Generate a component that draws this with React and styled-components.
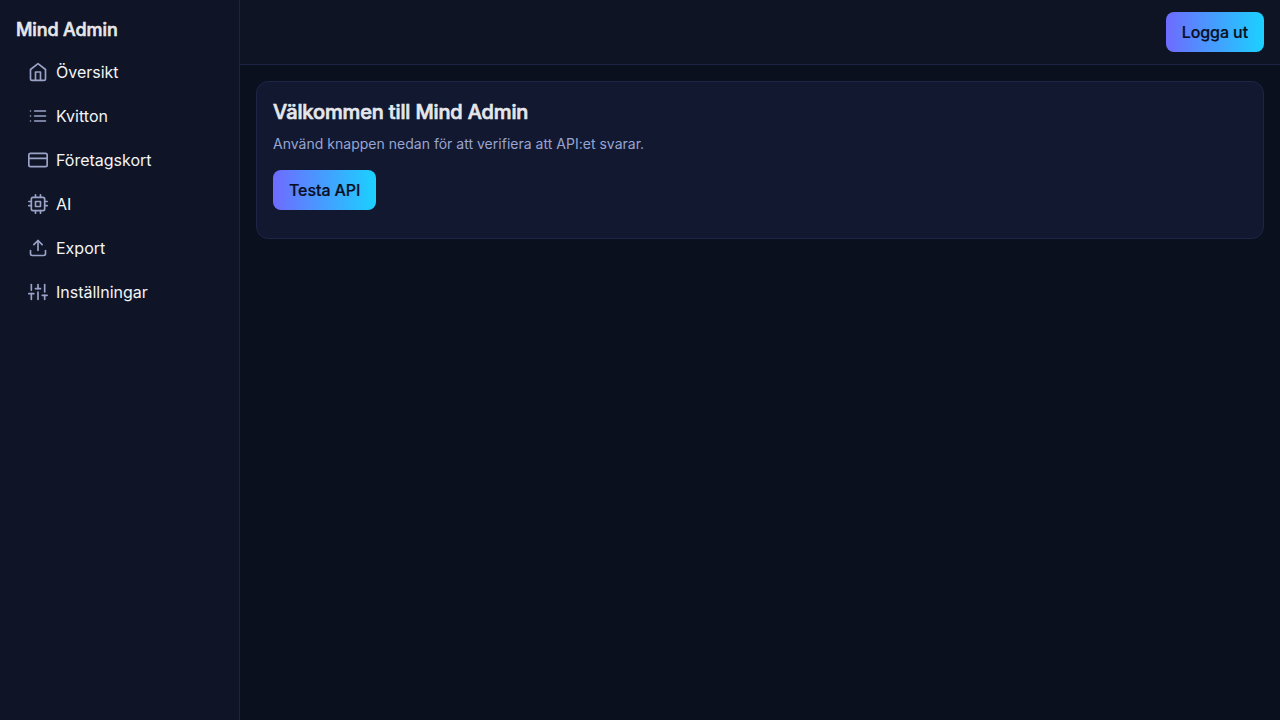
import React from 'react';
import styled, { createGlobalStyle } from 'styled-components';
import { FiHome, FiList, FiCreditCard, FiCpu, FiUpload, FiSliders } from 'react-icons/fi';

const GlobalStyle = createGlobalStyle`
  *, *::before, *::after { box-sizing: border-box; }
  body {
    margin: 0;
    background: #0a101e;
    color: #e5e7eb;
    font-family: Inter, sans-serif;
    font-size: 16px;
    line-height: 24px;
  }
`;

const Layout = styled.div`
  display: grid;
  grid-template-columns: 240px 1fr;
  min-height: 100vh;
`;

const Sidebar = styled.aside`
  padding: 16px;
  background: #0f1426;
  border-right: 1px solid #1e2445;
`;

const Brand = styled.div`
  margin-bottom: 8px;
  font-size: 18px;
  line-height: 28px;
  font-weight: 500;
  letter-spacing: -0.12px;
  -webkit-text-stroke: 0.6px currentColor;
`;

const Nav = styled.nav`
  display: flex;
  flex-direction: column;
  gap: 4px;
`;

const NavLink = styled.a`
  display: flex;
  align-items: center;
  gap: 8px;
  padding: 8px 12px;
  border-radius: 8px;
  color: #f3f4f6;
  text-decoration: none;

  svg {
    width: 20px;
    height: 20px;
    color: #9aa3c7;
  }
`;

const Main = styled.div`
  display: flex;
  flex-direction: column;
`;

const TopBar = styled.header`
  display: flex;
  align-items: center;
  justify-content: flex-end;
  height: 65px;
  padding: 0 16px;
  background: #0e1423;
  border-bottom: 1px solid #1e2445;
`;

const Content = styled.main`
  padding: 16px;
`;

const Card = styled.section`
  padding: 16px 16px 28px;
  background: #121830;
  border: 1px solid #1e2445;
  border-radius: 12px;
`;

const Title = styled.h1`
  margin: 0 0 8px;
  font-size: 20px;
  line-height: 28px;
  font-weight: 500;
  letter-spacing: -0.14px;
  -webkit-text-stroke: 0.7px currentColor;
`;

const Text = styled.p`
  margin: 0 0 16px;
  font-size: 14px;
  line-height: 20px;
  letter-spacing: 0.015px;
  color: #97a5d2;
`;

const Button = styled.button`
  display: block;
  height: 40px;
  padding: 8px 16px;
  border: 0;
  border-radius: 8px;
  background: linear-gradient(90deg, #6e6bff, #1bd1ff);
  color: #0a0f1e;
  font: inherit;
  font-weight: 500;
  letter-spacing: -0.08px;
  -webkit-text-stroke: 0.2px currentColor;
`;

const links = [
  ['Översikt', FiHome],
  ['Kvitton', FiList],
  ['Företagskort', FiCreditCard],
  ['AI', FiCpu],
  ['Export', FiUpload],
  ['Inställningar', FiSliders],
];

export default function App() {
  return (
    <>
      <GlobalStyle />
      <Layout>
        <Sidebar>
          <Brand>Mind Admin</Brand>
          <Nav>
            {links.map(([label, Icon]) => (
              <NavLink key={label} href="#">
                <Icon />
                <span>{label}</span>
              </NavLink>
            ))}
          </Nav>
        </Sidebar>
        <Main>
          <TopBar>
            <Button>Logga ut</Button>
          </TopBar>
          <Content>
            <Card>
              <Title>Välkommen till Mind Admin</Title>
              <Text>Använd knappen nedan för att verifiera att API:et svarar.</Text>
              <Button>Testa API</Button>
            </Card>
          </Content>
        </Main>
      </Layout>
    </>
  );
}
